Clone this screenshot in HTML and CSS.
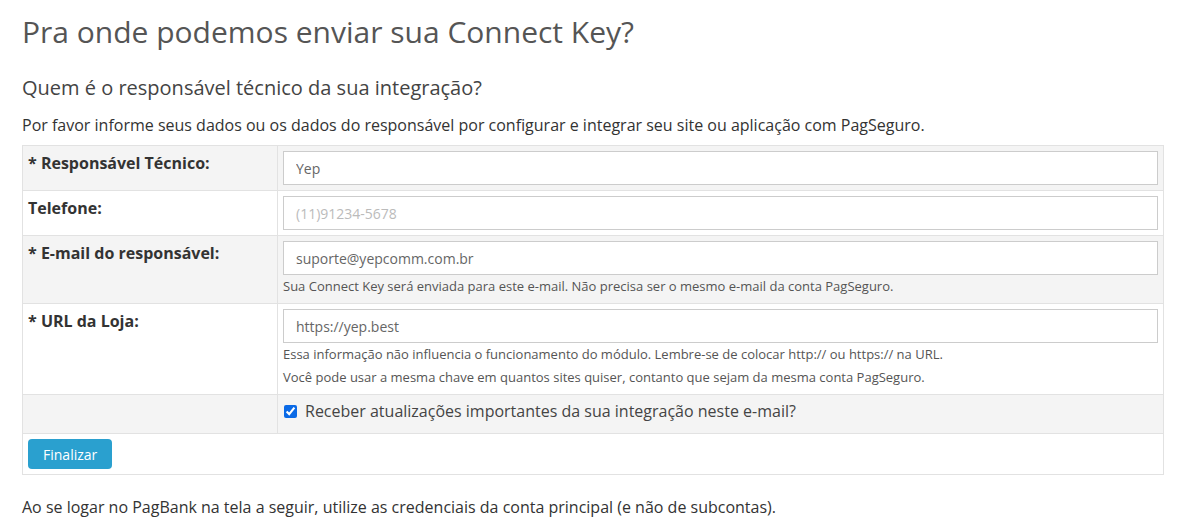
FILE: index.html
```html
<!DOCTYPE html>
<html lang="pt-BR">
<head>
  <meta charset="UTF-8" />
  <title>Connect Key</title>
  <link rel="stylesheet" href="styles.css">
</head>
<body>
  <div class="page">
    <h1 class="title">Pra onde podemos enviar sua Connect Key?</h1>
    <h2 class="subtitle">Quem é o responsável técnico da sua integração?</h2>
    <p class="intro">Por favor informe seus dados ou os dados do responsável por configurar e integrar seu site ou aplicação com PagSeguro.</p>

    <form class="key-form">
      <table class="form-table">
        <tr class="striped">
          <th>* Responsável Técnico:</th>
          <td><input type="text" value="Yep" /></td>
        </tr>
        <tr>
          <th>Telefone:</th>
          <td><input type="text" placeholder="(11)91234-5678" /></td>
        </tr>
        <tr class="striped">
          <th>* E-mail do responsável:</th>
          <td>
            <input type="email" value="suporte@yepcomm.com.br" />
            <div class="help">Sua Connect Key será enviada para este e-mail. Não precisa ser o mesmo e-mail da conta PagSeguro.</div>
          </td>
        </tr>
        <tr>
          <th>* URL da Loja:</th>
          <td>
            <input type="text" value="https://yep.best" />
            <div class="help">Essa informação não influencia o funcionamento do módulo. Lembre-se de colocar http:// ou https:// na URL.</div>
            <div class="help">Você pode usar a mesma chave em quantos sites quiser, contanto que sejam da mesma conta PagSeguro.</div>
          </td>
        </tr>
        <tr class="striped">
          <th></th>
          <td>
            <label class="check">
              <input type="checkbox" checked />
              <span>Receber atualizações importantes da sua integração neste e-mail?</span>
            </label>
          </td>
        </tr>
        <tr>
          <td colspan="2" class="actions"><button type="button" class="submit-btn">Finalizar</button></td>
        </tr>
      </table>
    </form>

    <p class="note">Ao se logar no PagBank na tela a seguir, utilize as credenciais da conta principal (e não de subcontas).</p>
  </div>
</body>
</html>
```

FILE: styles.css
```css
* {
  box-sizing: border-box;
  margin: 0;
  padding: 0;
}

body {
  font-family: 'Open Sans', sans-serif;
  color: #333;
  background: white;
}

.page {
  padding: 12px 13px 0 22px;
}

.title {
  font-size: 30px;
  font-weight: 400;
  color: #555;
  line-height: 40px;
}

.subtitle {
  font-size: 20px;
  font-weight: 400;
  color: #444;
  margin-top: 22px;
  line-height: 28px;
}

.intro {
  font-size: 16px;
  color: #333;
  margin-top: 12px;
  line-height: 22px;
}

.key-form {
  margin-top: 9px;
}

.form-table {
  width: 1142px;
  border-collapse: collapse;
  border: 1px solid #ddd;
}

.form-table th,
.form-table td {
  border: 1px solid #e2e2e2;
  padding: 5px;
  vertical-align: top;
  text-align: left;
}

.form-table th {
  width: 255px;
  padding-top: 6px;
  font-size: 16px;
  font-weight: 700;
  color: #333;
  line-height: 22px;
}

.form-table tr.striped {
  background: #f4f4f4;
}

.form-table input[type="text"],
.form-table input[type="email"] {
  display: block;
  width: 100%;
  height: 34px;
  padding: 6px 12px;
  font-family: 'Open Sans', sans-serif;
  font-size: 14px;
  color: #666;
  background: white;
  border: 1px solid #ccc;
}

.form-table input::placeholder {
  color: #bbb;
}

.help {
  font-size: 13px;
  color: #555;
  line-height: 23px;
}

.check {
  display: flex;
  align-items: center;
  gap: 8px;
  padding: 0 0 6px 1px;
  font-size: 16px;
  line-height: 22px;
  color: #444;
}

.check input {
  width: 13px;
  height: 13px;
  accent-color: #0b6ae6;
}

.submit-btn {
  font-family: 'Open Sans', sans-serif;
  font-size: 14px;
  color: white;
  background: #2aa0cf;
  border: none;
  border-radius: 4px;
  height: 30px;
  padding: 0 15px;
  cursor: pointer;
}

.note {
  font-size: 16px;
  color: #333;
  margin-top: 21px;
  line-height: 22px;
}
```
